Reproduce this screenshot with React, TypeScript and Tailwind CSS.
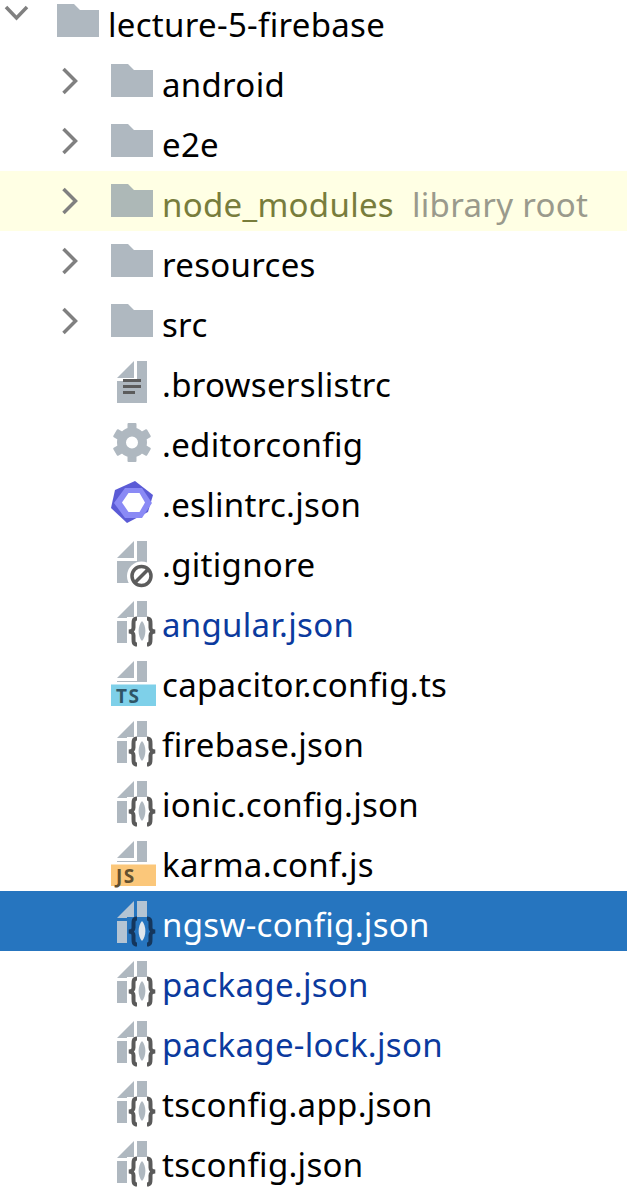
import React from "react";

const GREY = "#afb8c0";

function Chevron({ open }: { open?: boolean }) {
  return (
    <svg width="54" height="60" viewBox="0 0 54 60" className="shrink-0">
      {open ? (
        <path d="M6 16 L16.500 27 L27 16" fill="none" stroke="#808080" strokeWidth="3.500" />
      ) : (
        <path d="M9.500 18 L21.500 30 L9.500 42" fill="none" stroke="#808080" strokeWidth="3.500" />
      )}
    </svg>
  );
}

function Folder({ lib }: { lib?: boolean }) {
  return (
    <svg width="54" height="60" viewBox="0 0 54 60" className="shrink-0">
      <path d="M3 13 H20 L26 19 H45 V46 H3 Z" fill={lib ? "#adb8b7" : GREY} />
    </svg>
  );
}

function Sheet({ short, fill = GREY }: { short?: boolean; fill?: string }) {
  return (
    <>
      <path d="M9 27 L26 10 V27 Z" fill={fill} />
      <path d={short ? "M29 10 H39 V31 H9 V30 H29 Z" : "M29 10 H39 V52 H9 V30 H29 Z"} fill={fill} />
    </>
  );
}

function Icon({ kind, selected }: { kind: string; selected?: boolean }) {
  const braces = selected ? "#14365c" : "#5a5a5a";
  return (
    <svg width="54" height="60" viewBox="0 0 54 60" className="shrink-0">
      {kind === "text" && (
        <>
          <Sheet />
          <path d="M15 29.500 H33 M15 35.500 H33 M15 41.500 H27" stroke="#5c5c5c" strokeWidth="3" />
        </>
      )}
      {kind === "gear" && (
        <>
          {[0, 60, 120, 180, 240, 300].map((a) => (
            <rect key={a} x="19.500" y="12" width="9" height="10" rx="1" fill={GREY} transform={`rotate(${a} 24 31.500)`} />
          ))}
          <circle cx="24" cy="31.500" r="10.500" fill="none" stroke={GREY} strokeWidth="9" />
        </>
      )}
      {kind === "eslint" && (
        <>
          <path d="M27 10 L45 24 L40 41 L19 52 L3 37 L7 19 Z" fill="#5b5bd6" />
          <path d="M6 32 L17 17 H34 L44 32 L34 47 H17 Z" fill="#8a8af5" />
          <path d="M14 31.500 L20.500 22 H31.500 L37 31.500 L31.500 41 H20.500 Z" fill="#fff" />
        </>
      )}
      {kind === "ignore" && (
        <>
          <Sheet />
          <circle cx="33.500" cy="45" r="14.500" fill="#fff" />
          <circle cx="33.500" cy="45" r="9.500" fill="none" stroke="#5c5c5c" strokeWidth="3.500" />
          <path d="M27 51.500 L40 38.500" stroke="#5c5c5c" strokeWidth="3.500" />
        </>
      )}
      {kind === "json" && (
        <>
          <Sheet fill={selected ? "#b4c4d3" : GREY} />
          <path d="M19 26 H49 V55 H19 Z" fill={selected ? "#2675bf" : "#fff"} />
          <path d="M34 30 C38.500 35 38.500 45 34 50 C29.500 45 29.500 35 34 30 Z" fill={selected ? "#dfe6ec" : GREY} />
          <path
            d="M29 27.500 C25.500 27.500 25.500 30 25.500 33 L25.500 36.500 C25.500 39 24.500 40 21 40.500 C24.500 41 25.500 42 25.500 44.500 L25.500 48 C25.500 51 25.500 53.500 29 53.500 M39 27.500 C42.500 27.500 42.500 30 42.500 33 L42.500 36.500 C42.500 39 43.500 40 47 40.500 C43.500 41 42.500 42 42.500 44.500 L42.500 48 C42.500 51 42.500 53.500 39 53.500"
            fill="none"
            stroke={braces}
            strokeWidth="4"
          />
        </>
      )}
      {(kind === "ts" || kind === "js") && (
        <>
          <Sheet short />
          <rect x="3" y="33.500" width="45" height="21.500" fill={kind === "ts" ? "#7ed0e9" : "#fbc77a"} />
          <text x="8" y="51.500" fontSize="19" fontWeight="700" fontFamily="'Open Sans', sans-serif" fill={kind === "ts" ? "#2f5566" : "#63502f"} letterSpacing="1.500">
            {kind === "ts" ? "TS" : "JS"}
          </text>
        </>
      )}
    </svg>
  );
}

type Item = { name: string; kind: string; color?: string };

const folders = ["android", "e2e", "node_modules", "resources", "src"];
const files: Item[] = [
  { name: ".browserslistrc", kind: "text" },
  { name: ".editorconfig", kind: "gear" },
  { name: ".eslintrc.json", kind: "eslint" },
  { name: ".gitignore", kind: "ignore" },
  { name: "angular.json", kind: "json", color: "text-[#0b3a9e]" },
  { name: "capacitor.config.ts", kind: "ts" },
  { name: "firebase.json", kind: "json" },
  { name: "ionic.config.json", kind: "json" },
  { name: "karma.conf.js", kind: "js" },
  { name: "ngsw-config.json", kind: "json", color: "text-white" },
  { name: "package.json", kind: "json", color: "text-[#0b3a9e]" },
  { name: "package-lock.json", kind: "json", color: "text-[#0b3a9e]" },
  { name: "tsconfig.app.json", kind: "json" },
  { name: "tsconfig.json", kind: "json" },
];

export default function App() {
  return (
    <div className="-mt-[9px] w-[627px] h-[1199px] overflow-hidden bg-white text-[33px] tracking-[0.3px] text-black font-['Noto_Sans',sans-serif]">
      <div className="flex h-[60px] items-center">
        <Chevron open />
        <Folder />
        <span className="pt-[8px]">lecture-5-firebase</span>
      </div>
      {folders.map((f) => {
        const lib = f === "node_modules";
        return (
          <div key={f} className={`flex h-[60px] items-center pl-[54px] ${lib ? "bg-[#ffffe4]" : ""}`}>
            <Chevron />
            <Folder lib={lib} />
            <span className={`pt-[8px] ${lib ? "text-[#787d3c]" : ""}`}>{f}</span>
            {lib && <span className="ml-[18px] pt-[8px] text-[#9a9a8c]">library root</span>}
          </div>
        );
      })}
      {files.map((f) => {
        const selected = f.name === "ngsw-config.json";
        return (
          <div key={f.name} className={`flex h-[60px] items-center pl-[108px] ${selected ? "bg-[#2675bf]" : ""}`}>
            <Icon kind={f.kind} selected={selected} />
            <span className={`pt-[8px] ${f.color ?? ""}`}>{f.name}</span>
          </div>
        );
      })}
    </div>
  );
}
